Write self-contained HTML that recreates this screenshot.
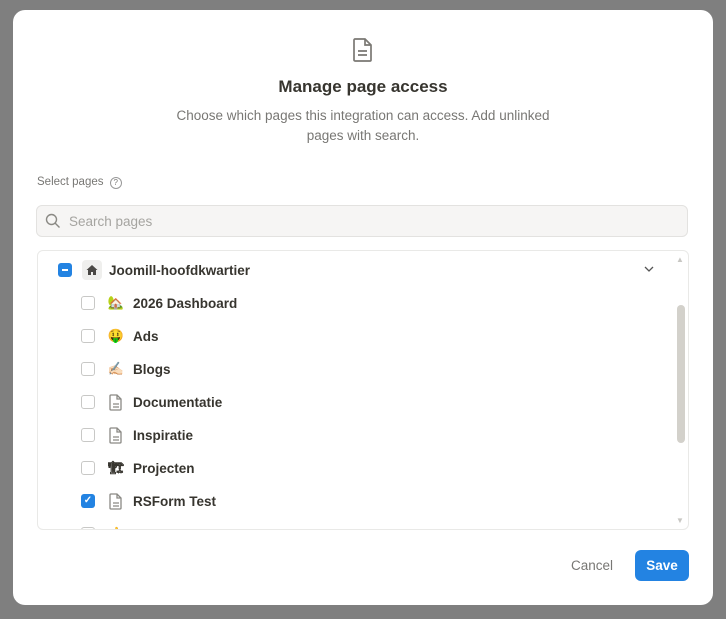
<!DOCTYPE html><html><head><style>
body{margin:0;width:726px;height:619px;background:#7f7f7f;font-family:"Liberation Sans",sans-serif;position:relative;overflow:hidden}
.m{position:absolute;left:13px;top:10px;width:700px;height:595px;background:#fff;border-radius:12px}
.a{position:absolute}
.row{position:absolute;left:0;height:20px;font-size:13.5px;font-weight:bold;color:#37352f;display:flex;align-items:center}
.cb{border:1px solid #c8c8c6;border-radius:3px;margin-right:12px;box-sizing:border-box;width:14px;height:14px}
.ic{width:18px;margin-right:8px;font-size:13px;text-align:center;display:flex;justify-content:center}
</style></head><body>
<div class="m">
<svg class="a" style="left:339px;top:27px" width="22" height="26" viewBox="0 0 22 26"><path d="M3 2h10l6 6v15a1 1 0 0 1-1 1H3a1 1 0 0 1-1-1V3a1 1 0 0 1 1-1z M13 2v6h6 M6 14h9 M6 18h9" fill="none" stroke="#7a7873" stroke-width="1.7"/></svg>
<div class="a" style="left:0;width:700px;top:67px;text-align:center;font-size:17px;font-weight:bold;color:#37352f">Manage page access</div>
<div class="a" style="left:150px;width:400px;top:96px;text-align:center;font-size:13.5px;line-height:20px;color:#787774">Choose which pages this integration can access. Add unlinked pages with search.</div>
<div class="a" style="left:24px;top:166px;font-size:11.5px;color:#787774">Select pages <span style="display:inline-block;width:10px;height:10px;border:1px solid #999;border-radius:50%;font-size:8px;text-align:center;line-height:10px;margin-left:3px">?</span></div>
<div class="a" style="left:23px;top:195px;width:652px;height:32px;background:#f6f5f4;border:1px solid #e3e2e0;border-radius:6px;box-sizing:border-box"></div>
<svg class="a" style="left:32px;top:203px" width="16" height="16" viewBox="0 0 16 16"><circle cx="6.5" cy="6.5" r="5" fill="none" stroke="#8a8984" stroke-width="1.4"/><path d="M10 10l4.5 4.5" stroke="#8a8984" stroke-width="1.4"/></svg>
<div class="a" style="left:56px;top:204px;font-size:13.5px;color:#a5a4a0">Search pages</div>
<div class="a" style="left:24px;top:240px;width:652px;height:280px;border:1px solid #e9e9e7;border-radius:6px;box-sizing:border-box;overflow:hidden">
<div class="row" style="left:20px;top:9px"><div style="width:14px;height:14px;background:#2383e2;border-radius:3px;margin-right:10px;position:relative"><div style="position:absolute;left:4px;top:6px;width:6px;height:2px;background:#fff"></div></div><div style="width:20px;height:20px;background:#efefed;border-radius:4px;margin-right:7px;display:flex;align-items:center;justify-content:center"><svg width="12" height="12" viewBox="0 0 12 12"><path d="M6 1L0.5 6H2v5h3V8h2v3h3V6h1.5z" fill="#4a4845"/></svg></div>Joomill-hoofdkwartier</div>
<svg class="a" style="left:606px;top:14px" width="10" height="8" viewBox="0 0 10 8"><path d="M1 2l4 4 4-4" fill="none" stroke="#555" stroke-width="1.3"/></svg>
<div class="row" style="left:43px;top:42px"><div class="cb"></div><div class="ic">🏡</div>2026 Dashboard</div>
<div class="row" style="left:43px;top:75px"><div class="cb"></div><div class="ic">🤑</div>Ads</div>
<div class="row" style="left:43px;top:108px"><div class="cb"></div><div class="ic">✍🏻</div>Blogs</div>
<div class="row" style="left:43px;top:141px"><div class="cb"></div><div class="ic"><svg width="14" height="17" viewBox="0 0 14 17"><path d="M2 1h6l4 4v10a1 1 0 0 1-1 1H2a1 1 0 0 1-1-1V2a1 1 0 0 1 1-1z M8 1v4h4 M4 10h6 M4 13h6" fill="none" stroke="#8a8984" stroke-width="1.3"/></svg></div>Documentatie</div>
<div class="row" style="left:43px;top:174px"><div class="cb"></div><div class="ic"><svg width="14" height="17" viewBox="0 0 14 17"><path d="M2 1h6l4 4v10a1 1 0 0 1-1 1H2a1 1 0 0 1-1-1V2a1 1 0 0 1 1-1z M8 1v4h4 M4 10h6 M4 13h6" fill="none" stroke="#8a8984" stroke-width="1.3"/></svg></div>Inspiratie</div>
<div class="row" style="left:43px;top:207px"><div class="cb"></div><div class="ic">🏗</div>Projecten</div>
<div class="row" style="left:43px;top:240px"><div class="cb" style="background:#2383e2;border:none;color:#fff;font-size:10px;text-align:center;line-height:14px">✓</div><div class="ic"><svg width="14" height="17" viewBox="0 0 14 17"><path d="M2 1h6l4 4v10a1 1 0 0 1-1 1H2a1 1 0 0 1-1-1V2a1 1 0 0 1 1-1z M8 1v4h4 M4 10h6 M4 13h6" fill="none" stroke="#8a8984" stroke-width="1.3"/></svg></div>RSForm Test</div>
<div class="row" style="left:43px;top:273px"><div class="cb"></div><div class="ic">👍</div>Social Media</div>
<div class="a" style="left:639px;top:54px;width:8px;height:138px;background:#d3d1cb;border-radius:4px"></div>
<div class="a" style="left:638px;top:4px;font-size:8px;color:#c8c7c3">▲</div>
<div class="a" style="left:638px;top:265px;font-size:8px;color:#c8c7c3">▼</div>
</div>
<div class="a" style="left:558px;top:548px;font-size:13.5px;color:#787774">Cancel</div>
<div class="a" style="left:622px;top:540px;width:54px;height:31px;background:#2383e2;border-radius:6px;color:#fff;font-size:13.5px;font-weight:bold;text-align:center;line-height:31px">Save</div>
</div>
</body></html>
